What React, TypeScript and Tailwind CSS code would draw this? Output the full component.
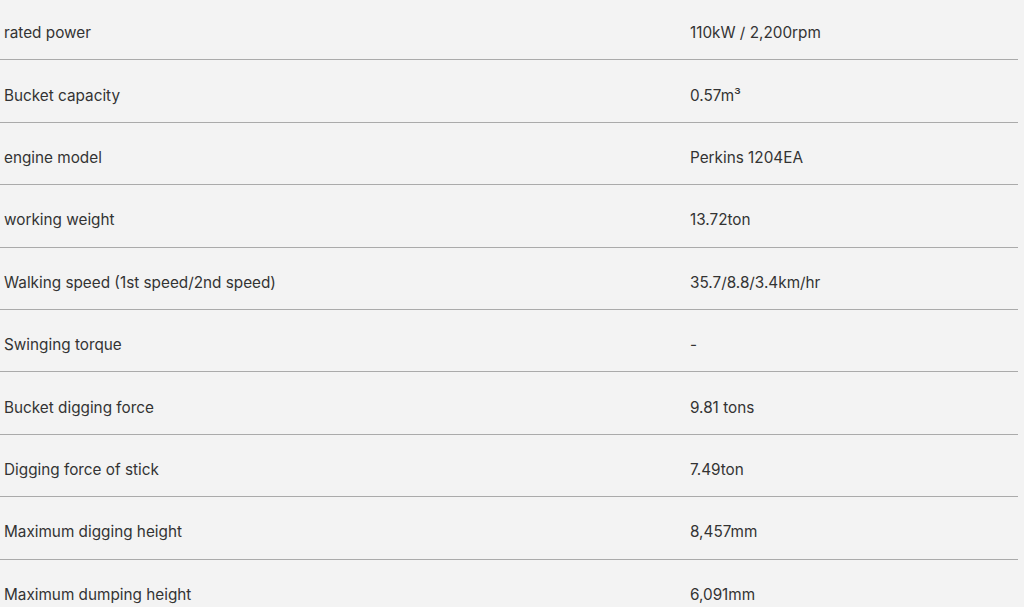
const rows: [string, string][] = [
  ["rated power", "110kW / 2,200rpm"],
  ["Bucket capacity", "0.57m³"],
  ["engine model", "Perkins 1204EA"],
  ["working weight", "13.72ton"],
  ["Walking speed (1st speed/2nd speed)", "35.7/8.8/3.4km/hr"],
  ["Swinging torque", "-"],
  ["Bucket digging force", "9.81 tons"],
  ["Digging force of stick", "7.49ton"],
  ["Maximum digging height", "8,457mm"],
  ["Maximum dumping height", "6,091mm"],
];

export default function App() {
  return (
    <div
      className="w-[1024px] h-[607px] overflow-hidden bg-[#f3f3f3] text-[#333] text-[15.3px]"
      style={{ fontFamily: "Inter, 'Liberation Sans', sans-serif" }}
    >
      <div className="w-[1018px] -mt-[2px]">
        {rows.map(([k, v], i) => (
          <div
            key={i}
            className={`flex items-center h-[62.4px] pt-[10px] ${i < rows.length - 1 ? "border-b border-[#aaa]" : ""}`}
          >
            <div className="w-[690px] pl-[4px]">{k}</div>
            <div>{v}</div>
          </div>
        ))}
      </div>
    </div>
  );
}
